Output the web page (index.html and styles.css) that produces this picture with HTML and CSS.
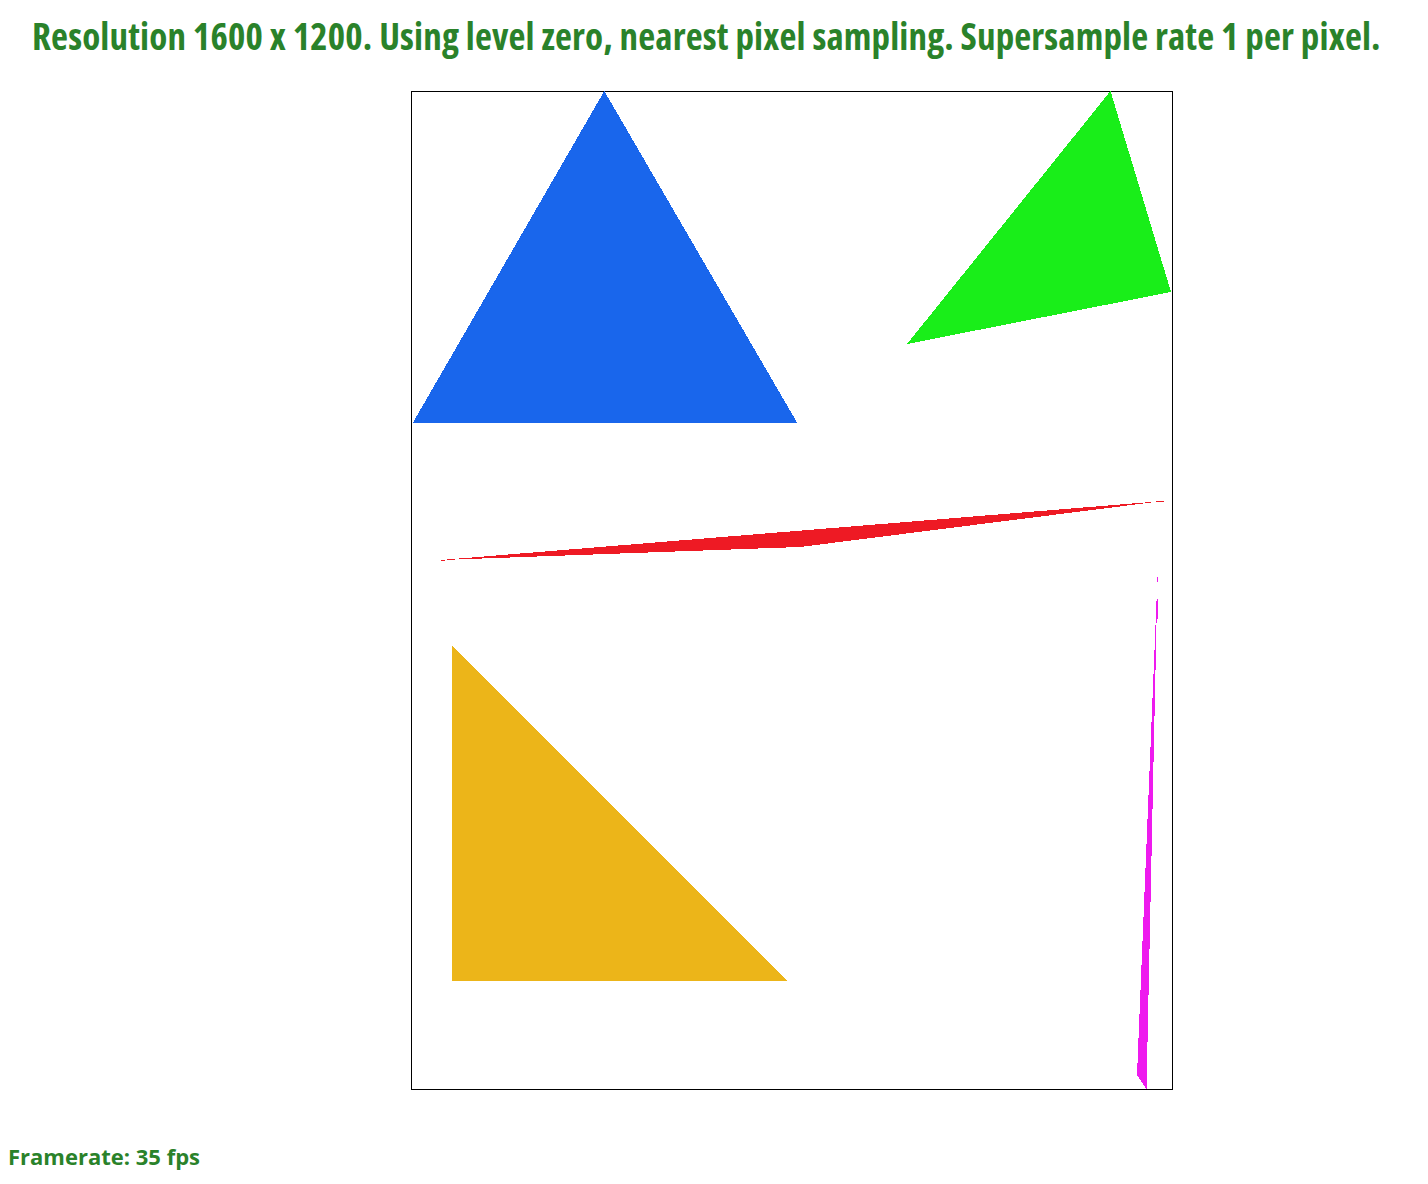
FILE: index.html
```html
<!DOCTYPE html>
<html>
<head>
<meta charset="utf-8">
<link rel="stylesheet" href="styles.css">
</head>
<body>
<h1 class="title">Resolution 1600 x 1200. Using level zero, nearest pixel sampling. Supersample rate 1 per pixel.</h1>
<div class="stage">
  <svg class="canvas" width="762" height="999" viewBox="0 0 762 999" shape-rendering="crispEdges">
    <rect x="0.5" y="0.5" width="761" height="998" fill="#fff" stroke="#000" stroke-width="1"/>
    <polygon points="193.3,0 2,331.5 386,331.5" fill="#1966ec"/>
    <polygon points="699.5,0 760,201 496,253" fill="#19ee19"/>
    <polygon points="30,469 752,410 389,456" fill="#ee1a24"/>
    <rect x="30" y="468.5" width="4" height="1" fill="#ee1a24"/>
    <rect x="745" y="409.5" width="8" height="1" fill="#ee1a24"/>
    <polygon points="41,554.5 41,890 377,890" fill="#ecb519"/>
    <polygon points="746.5,486 726,984 735.5,998" fill="#ee1aee"/>
    <rect x="746" y="486" width="1" height="5" fill="#ee1aee"/>
    <rect x="745.5" y="508" width="1" height="20" fill="#ee1aee"/>
  </svg>
</div>
<div class="fps">Framerate: 35 fps</div>
</body>
</html>
```
FILE: styles.css
```css
html, body {
  margin: 0;
  padding: 0;
  background: #fff;
}
body {
  width: 1428px;
  height: 1184px;
  overflow: hidden;
  font-family: "Open Sans", "DejaVu Sans", sans-serif;
  color: #2a822a;
}
.title {
  margin: 0;
  padding: 17px 0 0 32px;
  font-size: 37px;
  line-height: 37px;
  font-weight: 700;
  font-stretch: 75%;
  letter-spacing: 0.15px;
  white-space: nowrap;
}
.stage {
  padding: 37px 0 0 411px;
  line-height: 0;
}
.canvas {
  display: block;
}
.fps {
  padding: 55px 0 0 8px;
  font-size: 22px;
  line-height: 22px;
  font-weight: 700;
  white-space: nowrap;
}
```
